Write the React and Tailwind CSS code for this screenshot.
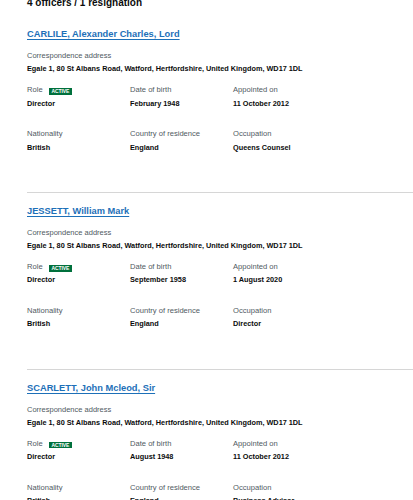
import React from "react";

const officers = [
  {
    name: "CARLILE, Alexander Charles, Lord",
    dob: "February 1948",
    appointed: "11 October 2012",
    nationality: "British",
    country: "England",
    occupation: "Queens Counsel",
  },
  {
    name: "JESSETT, William Mark",
    dob: "September 1958",
    appointed: "1 August 2020",
    nationality: "British",
    country: "England",
    occupation: "Director",
  },
  {
    name: "SCARLETT, John Mcleod, Sir",
    dob: "August 1948",
    appointed: "11 October 2012",
    nationality: "British",
    country: "England",
    occupation: "Business Advisor",
  },
];

const address =
  "Egale 1, 80 St Albans Road, Watford, Hertfordshire, United Kingdom, WD17 1DL";

function Label({ children }) {
  return (
    <div className="text-[7.6px] leading-[13.5px] text-[#505a5f] whitespace-nowrap">
      {children}
    </div>
  );
}

function Value({ children }) {
  return (
    <div className="text-[7.3px] leading-[13.5px] font-bold text-[#0b0c0c] whitespace-nowrap">
      {children}
    </div>
  );
}

function Officer({ o }) {
  return (
    <div className="pt-[12px]">
      <a
        href="#"
        className="block text-[9.3px] leading-[12px] font-bold text-[#1d70b8] underline underline-offset-[1.5px] decoration-1 whitespace-nowrap"
      >
        {o.name}
      </a>
      <div className="mt-[9.2px] text-[7.5px] leading-[13px] text-[#505a5f]">
        Correspondence address
      </div>
      <div className="text-[7.3px] leading-[13px] font-bold text-[#0b0c0c] whitespace-nowrap">
        {address}
      </div>
      <div className="mt-[8px] grid grid-cols-[103px_103px_103px] gap-y-[17px]">
        <div>
          <div className="flex items-start">
            <Label>Role</Label>
            <span className="ml-[6px] mt-[5.3px] bg-[#00703c] text-white font-bold text-[5px] leading-[6.4px] h-[6.4px] px-[2.8px] tracking-[-0.1px]">
              ACTIVE
            </span>
          </div>
          <Value>Director</Value>
        </div>
        <div>
          <Label>Date of birth</Label>
          <Value>{o.dob}</Value>
        </div>
        <div>
          <Label>Appointed on</Label>
          <Value>{o.appointed}</Value>
        </div>
        <div>
          <Label>Nationality</Label>
          <Value>{o.nationality}</Value>
        </div>
        <div>
          <Label>Country of residence</Label>
          <Value>{o.country}</Value>
        </div>
        <div>
          <Label>Occupation</Label>
          <Value>{o.occupation}</Value>
        </div>
      </div>
      <div className="mt-[37.6px] border-t border-[#d6d6d6]" />
    </div>
  );
}

export default function App() {
  return (
    <div className="w-full overflow-hidden bg-white pl-[27px] font-['Liberation_Sans',Arial,sans-serif]">
      <h2 className="-mt-[3px] text-[10px] leading-[12px] font-bold text-[#0b0c0c] whitespace-nowrap">
        4 officers / 1 resignation
      </h2>
      <div className="pt-[7px]">
        {officers.map((o) => (
          <Officer key={o.name} o={o} />
        ))}
      </div>
    </div>
  );
}
